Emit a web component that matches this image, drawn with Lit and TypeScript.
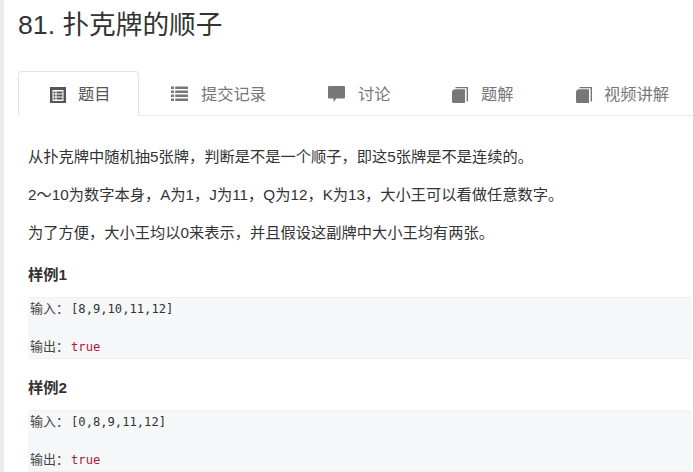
import { LitElement, html, css, svg } from "lit";
import { customElement } from "lit/decorators.js";

const icons = {
  list: svg`<path fill-rule="evenodd" d="M0 0h16v16H0zM2.500 3v11h11V3z"/><path d="M3.500 4.500h2v2h-2zM6.500 4.500h6v2h-6zM3.500 7.500h2v2h-2zM6.500 7.500h6v2h-6zM3.500 10.500h2v2h-2zM6.500 10.500h6v2h-6z"/>`,
  rows: svg`<path d="M0 .5h3v2.600H0zM4.200 .5H17v2.600H4.200zM0 4.500h3v2.600H0zM4.200 4.500H17v2.600H4.200zM0 8.500h3v2.600H0zM4.200 8.500H17v2.600H4.200zM0 12.500h3v2.600H0zM4.200 12.500H17v2.600H4.200z"/>`,
  comment: svg`<path d="M1 0h15a1 1 0 0 1 1 1v10.500a1 1 0 0 1-1 1H8.500L5.500 16v-3.500H1a1 1 0 0 1-1-1V1a1 1 0 0 1 1-1z"/>`,
  book: svg`<path d="M3 2.200C1.300 2.400 0 3.600 0 5v9.500C0 15.300.7 16 1.500 16H13V2.200z"/><path d="M3.500 0H16v14.500h-1.400V1.300H3.500z"/>`,
};

const tabs = [
  { icon: icons.list, label: "题目", active: true, width: 121, gap: 12, size: 16 },
  { icon: icons.rows, label: "提交记录", width: 157, gap: 13, size: 17 },
  { icon: icons.comment, label: "讨论", width: 124, gap: 13, size: 17 },
  { icon: icons.book, label: "题解", width: 124, gap: 13, size: 16 },
  { icon: icons.book, label: "视频讲解", width: 148, gap: 12, size: 16 },
];

const samples = [
  { title: "样例1", input: "[8,9,10,11,12]" },
  { title: "样例2", input: "[0,8,9,11,12]" },
];

@customElement("app-root")
class AppRoot extends LitElement {
  static styles = css`
    :host {
      display: block;
      height: 472px;
      overflow: hidden;
      background: #fff;
      color: #333;
      font-family: "Liberation Sans", "Noto Sans CJK SC", sans-serif;
      font-size: 15.25px;
    }
    * {
      box-sizing: border-box;
    }
    .page {
      border-left: 4px solid #ececec;
      padding-left: 14px;
      height: 472px;
    }
    h1 {
      margin: 0;
      padding-top: 8px;
      height: 71px;
      font-size: 26.67px;
      line-height: 34px;
      font-weight: 400;
    }
    .tabs {
      display: flex;
      height: 45px;
      border-bottom: 1px solid #e8e8e8;
    }
    .tab {
      display: flex;
      align-items: center;
      height: 45px;
      padding-left: 32px;
      padding-bottom: 2px;
      color: #777;
      font-size: 16.250px;
      white-space: nowrap;
      flex: none;
    }
    .tab svg {
      position: relative;
      top: 2px;
      fill: #777;
      flex: none;
    }
    .tab.active {
      background: #fff;
      color: #555;
      border: 1px solid #e3e3e3;
      border-bottom: 1px solid #fff;
      border-radius: 4px 4px 0 0;
      padding-left: 31px;
    }
    .tab.active svg {
      fill: #555;
    }
    .body {
      padding: 29px 1px 0 10px;
    }
    p {
      margin: 0 0 14px;
      height: 24px;
      line-height: 24px;
      white-space: nowrap;
    }
    h4 {
      margin: 17px 0 10px;
      font-size: 15.25px;
      line-height: 24px;
      font-weight: 700;
    }
    p + h4 {
      margin-top: 18px;
    }
    pre {
      margin: 0 0 14px;
      height: 62px;
      padding: 1px 0 0 2px;
      background: #f6f7f8;
      border-top: 1px solid #f1f1f2;
      border-bottom: 1px solid #f1f1f2;
      border-radius: 3px;
      font-family: "DejaVu Sans Mono", "Noto Sans CJK SC", monospace;
      font-size: 12.150px;
      line-height: 18.300px;
      color: #333;
    }
    .label {
      font-family: "Noto Sans CJK SC", sans-serif;
      font-size: 13px;
      margin-right: 2px;
      color: #444;
    }
    .val {
      color: #a71d3a;
    }
  `;

  render() {
    return html`
      <div class="page">
        <h1>81. 扑克牌的顺子</h1>
        <div class="tabs">
          ${tabs.map(
            (t) => html`
              <div
                class="tab ${t.active ? "active" : ""}"
                style="width:${t.width}px;gap:${t.gap}px"
              >
                <svg
                  width=${t.size}
                  height=${t.size}
                  viewBox="0 0 ${t.size} ${t.size}"
                >
                  ${t.icon}
                </svg>
                <span>${t.label}</span>
              </div>
            `
          )}
        </div>
        <div class="body">
          <p>从扑克牌中随机抽5张牌，判断是不是一个顺子，即这5张牌是不是连续的。</p>
          <p>2～10为数字本身，A为1，J为11，Q为12，K为13，大小王可以看做任意数字。</p>
          <p>为了方便，大小王均以0来表示，并且假设这副牌中大小王均有两张。</p>
          ${samples.map(
            (s) => html`
              <h4>${s.title}</h4>
              <pre><span class="label">输入：</span>${s.input}

<span class="label">输出：</span><span class="val">true</span></pre>
            `
          )}
        </div>
      </div>
    `;
  }
}

export { AppRoot };
